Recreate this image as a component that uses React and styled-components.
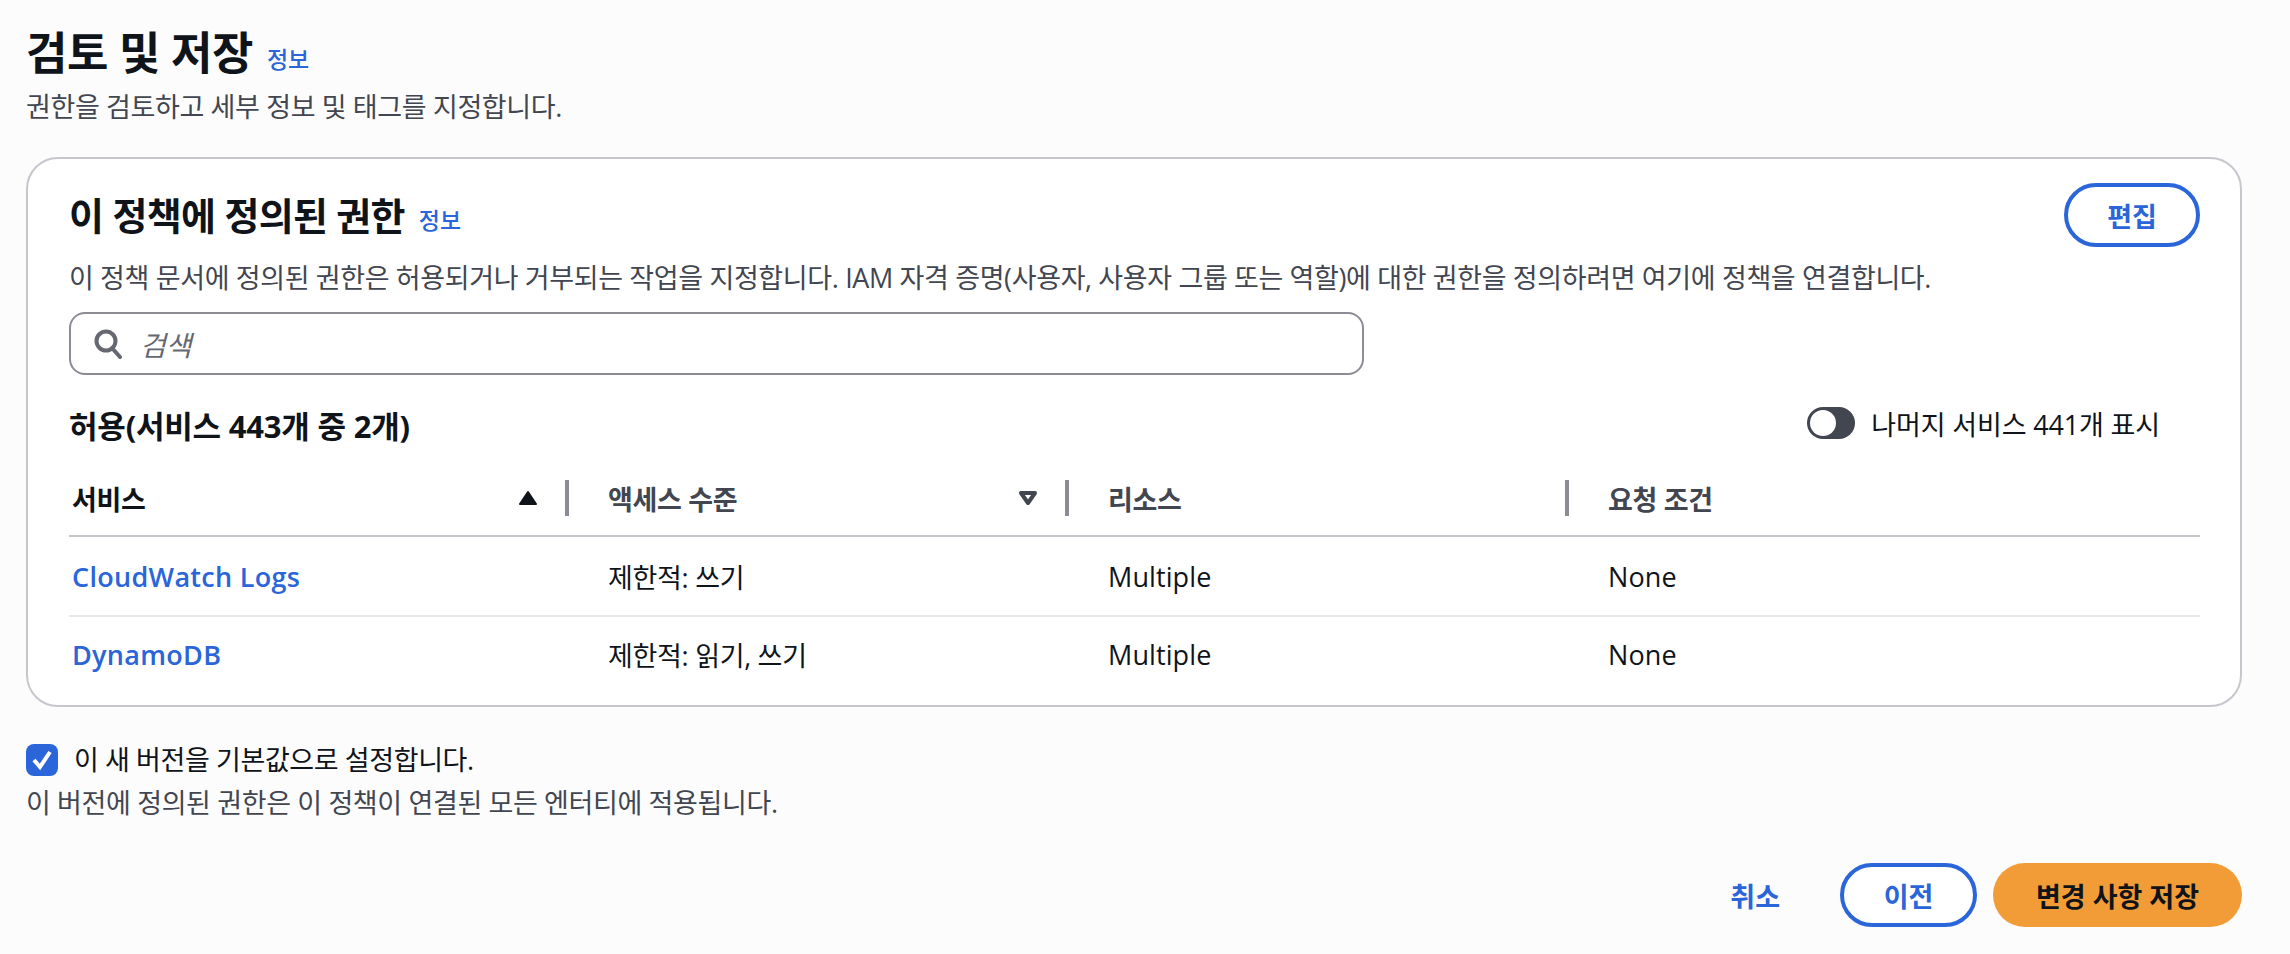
import React from 'react'
import styled, { createGlobalStyle } from 'styled-components'

const Global = createGlobalStyle`
  html, body { margin: 0; padding: 0; background: #fcfcfc; }
  body { font-family: "Open Sans", "Noto Sans CJK KR", sans-serif; color: #0f141a; }
`

const Page = styled.div`
  height: 954px;
  box-sizing: border-box;
  padding: 25px 48px 0 26px;
  display: flex;
  flex-direction: column;
`
const TitleRow = styled.div`
  display: flex;
  align-items: center;
  gap: 14px;
`
const PageTitle = styled.h1`
  margin: 0;
  font-size: 45px;
  line-height: 56px;
  font-weight: 700;
  letter-spacing: -0.5px;
`
const CardTitle = styled.h2`
  margin: 0;
  font-size: 38px;
  line-height: 44px;
  font-weight: 700;
  letter-spacing: -0.7px;
`
const InfoLink = styled.a`
  margin-top: ${p => p.$drop}px;
  font-size: 23px;
  font-weight: 500;
  color: #2a65d9;
`
const Note = styled.p`
  margin: ${p => p.$top || 0}px 0 0;
  font-size: 27px;
  line-height: 36px;
  color: #424650;
  letter-spacing: -0.37px;
`
const Card = styled.section`
  margin-top: 32px;
  box-sizing: border-box;
  height: 550px;
  background: #fff;
  border: 2px solid #c6c6cd;
  border-radius: 32px;
  padding: 24px 40px 0 41px;
`
const CardHead = styled.div`
  display: flex;
  justify-content: space-between;
  align-items: flex-start;
`
const CardIntro = styled.div`
  padding-top: 10px;
`
const OutlineButton = styled.button`
  box-sizing: border-box;
  width: ${p => p.$width}px;
  height: 64px;
  border: 4px solid #2a65d9;
  border-radius: 32px;
  background: #fff;
  color: #2a65d9;
  font: 700 27px "Open Sans", "Noto Sans CJK KR", sans-serif;
  padding: 0;
`
const SearchBox = styled.div`
  box-sizing: border-box;
  margin-top: 16px;
  width: 1295px;
  height: 63px;
  display: flex;
  align-items: center;
  gap: 18px;
  padding: 0 23px;
  background: #fff;
  border: 2px solid #8c8c94;
  border-radius: 16px;
`
const SearchHint = styled.span`
  font-size: 28px;
  font-style: italic;
  color: #656871;
`
const SectionRow = styled.div`
  margin: 29px 0 13px;
  display: flex;
  justify-content: space-between;
  align-items: center;
  height: 44px;
`
const SectionTitle = styled.h3`
  margin: 0;
  font-size: 31px;
  line-height: 44px;
  font-weight: 700;
  letter-spacing: -0.2px;
`
const ToggleLabel = styled.label`
  display: flex;
  align-items: center;
  gap: 16px;
  font-size: 27px;
  letter-spacing: -0.15px;
  margin: -6px 40px 0 0;
`
const Track = styled.span`
  box-sizing: border-box;
  width: 48px;
  height: 32px;
  border-radius: 16px;
  background: #424650;
  padding: 3px;
  display: flex;
`
const Knob = styled.span`
  width: 26px;
  height: 26px;
  border-radius: 50%;
  background: #fff;
`
const Row = styled.div`
  display: grid;
  grid-template-columns: 500px 500px 500px 1fr;
  align-items: center;
  height: ${p => p.$height}px;
  border-bottom: ${p => p.$line ? `2px solid ${p.$line}` : 'none'};
  box-sizing: border-box;
`
const HeadCell = styled.div`
  height: 36px;
  box-sizing: border-box;
  display: flex;
  align-items: center;
  justify-content: space-between;
  padding: 0 27px 0 ${p => p.$first ? 3 : 39}px;
  font-size: 27px;
  font-weight: 700;
  color: ${p => p.$first ? '#0f141a' : '#424650'};
  letter-spacing: -0.3px;
  border-right: ${p => p.$last ? 'none' : '4px solid #8c8c94'};
`
const Cell = styled.div`
  font-size: 27px;
  padding-left: ${p => p.$first ? 3 : 39}px;
  letter-spacing: ${p => p.$latin ? '0.1px' : '-0.3px'};
`
const ServiceLink = styled.a`
  font-weight: 600;
  letter-spacing: 0.3px;
  color: #2a65d9;
`
const CheckRow = styled.label`
  margin-top: 35px;
  display: flex;
  align-items: center;
  gap: 16px;
  font-size: 27px;
  line-height: 36px;
  letter-spacing: -0.4px;
`
const CheckBox = styled.span`
  width: 32px;
  height: 32px;
  border-radius: 8px;
  background: #2a65d9;
  display: flex;
  align-items: center;
  justify-content: center;
`
const Actions = styled.div`
  margin-top: 42px;
  display: flex;
  justify-content: flex-end;
  align-items: center;
`
const LinkButton = styled.button`
  border: 0;
  background: none;
  color: #2a65d9;
  font: 700 27px "Open Sans", "Noto Sans CJK KR", sans-serif;
  padding: 0;
  margin-right: 60px;
`
const PrimaryButton = styled.button`
  box-sizing: border-box;
  margin-left: 16px;
  width: 249px;
  height: 64px;
  border: 0;
  border-radius: 32px;
  background: #f29c37;
  color: #0f141a;
  font: 700 27px "Open Sans", "Noto Sans CJK KR", sans-serif;
  padding: 0;
`

const SearchIcon = () => (
  <svg width="28" height="30" viewBox="0 0 28 30" fill="none" stroke="#656871" strokeWidth="4">
    <circle cx="12" cy="12" r="9.5" />
    <path d="M18 19l8 9" strokeLinecap="round" />
  </svg>
)
const SortUp = () => (
  <svg width="20" height="16" viewBox="0 0 20 16" fill="#0f141a" stroke="#0f141a" strokeWidth="2" strokeLinejoin="round">
    <path d="M10 2L18 14H2z" />
  </svg>
)
const SortDown = () => (
  <svg width="20" height="16" viewBox="0 0 20 16" fill="none" stroke="#424650" strokeWidth="4" strokeLinejoin="round">
    <path d="M3 3h14L10 13z" />
  </svg>
)
const Check = () => (
  <svg width="22" height="22" viewBox="0 0 22 22" fill="none" stroke="#fff" strokeWidth="4">
    <path d="M3 11l6 7 10-15" />
  </svg>
)

const rows = [
  { service: 'CloudWatch Logs', access: '제한적: 쓰기' },
  { service: 'DynamoDB', access: '제한적: 읽기, 쓰기' },
]

export default function App() {
  return (
    <Page>
      <Global />
      <TitleRow>
        <PageTitle>검토 및 저장</PageTitle>
        <InfoLink $drop={10}>정보</InfoLink>
      </TitleRow>
      <Note $top={8}>권한을 검토하고 세부 정보 및 태그를 지정합니다.</Note>
      <Card>
        <CardHead>
          <CardIntro>
            <TitleRow>
              <CardTitle>이 정책에 정의된 권한</CardTitle>
              <InfoLink $drop={8}>정보</InfoLink>
            </TitleRow>
            <Note $top={23}>이 정책 문서에 정의된 권한은 허용되거나 거부되는 작업을 지정합니다. IAM 자격 증명(사용자, 사용자 그룹 또는 역할)에 대한 권한을 정의하려면 여기에 정책을 연결합니다.</Note>
          </CardIntro>
          <OutlineButton $width={136}>편집</OutlineButton>
        </CardHead>
        <SearchBox>
          <SearchIcon />
          <SearchHint>검색</SearchHint>
        </SearchBox>
        <SectionRow>
          <SectionTitle>허용(서비스 443개 중 2개)</SectionTitle>
          <ToggleLabel>
            <Track><Knob /></Track>
            나머지 서비스 441개 표시
          </ToggleLabel>
        </SectionRow>
        <Row $height={76} $line="#c6c6cd">
          <HeadCell $first>서비스<SortUp /></HeadCell>
          <HeadCell>액세스 수준<SortDown /></HeadCell>
          <HeadCell>리소스</HeadCell>
          <HeadCell $last>요청 조건</HeadCell>
        </Row>
        {rows.map((r, i) => (
          <Row key={r.service} $height={i === 0 ? 80 : 74} $line={i === 0 ? '#e8e8ec' : null}>
            <Cell $first $latin><ServiceLink>{r.service}</ServiceLink></Cell>
            <Cell>{r.access}</Cell>
            <Cell $latin>Multiple</Cell>
            <Cell $latin>None</Cell>
          </Row>
        ))}
      </Card>
      <CheckRow><CheckBox><Check /></CheckBox>이 새 버전을 기본값으로 설정합니다.</CheckRow>
      <Note $top={7}>이 버전에 정의된 권한은 이 정책이 연결된 모든 엔터티에 적용됩니다.</Note>
      <Actions>
        <LinkButton>취소</LinkButton>
        <OutlineButton $width={137}>이전</OutlineButton>
        <PrimaryButton>변경 사항 저장</PrimaryButton>
      </Actions>
    </Page>
  )
}
